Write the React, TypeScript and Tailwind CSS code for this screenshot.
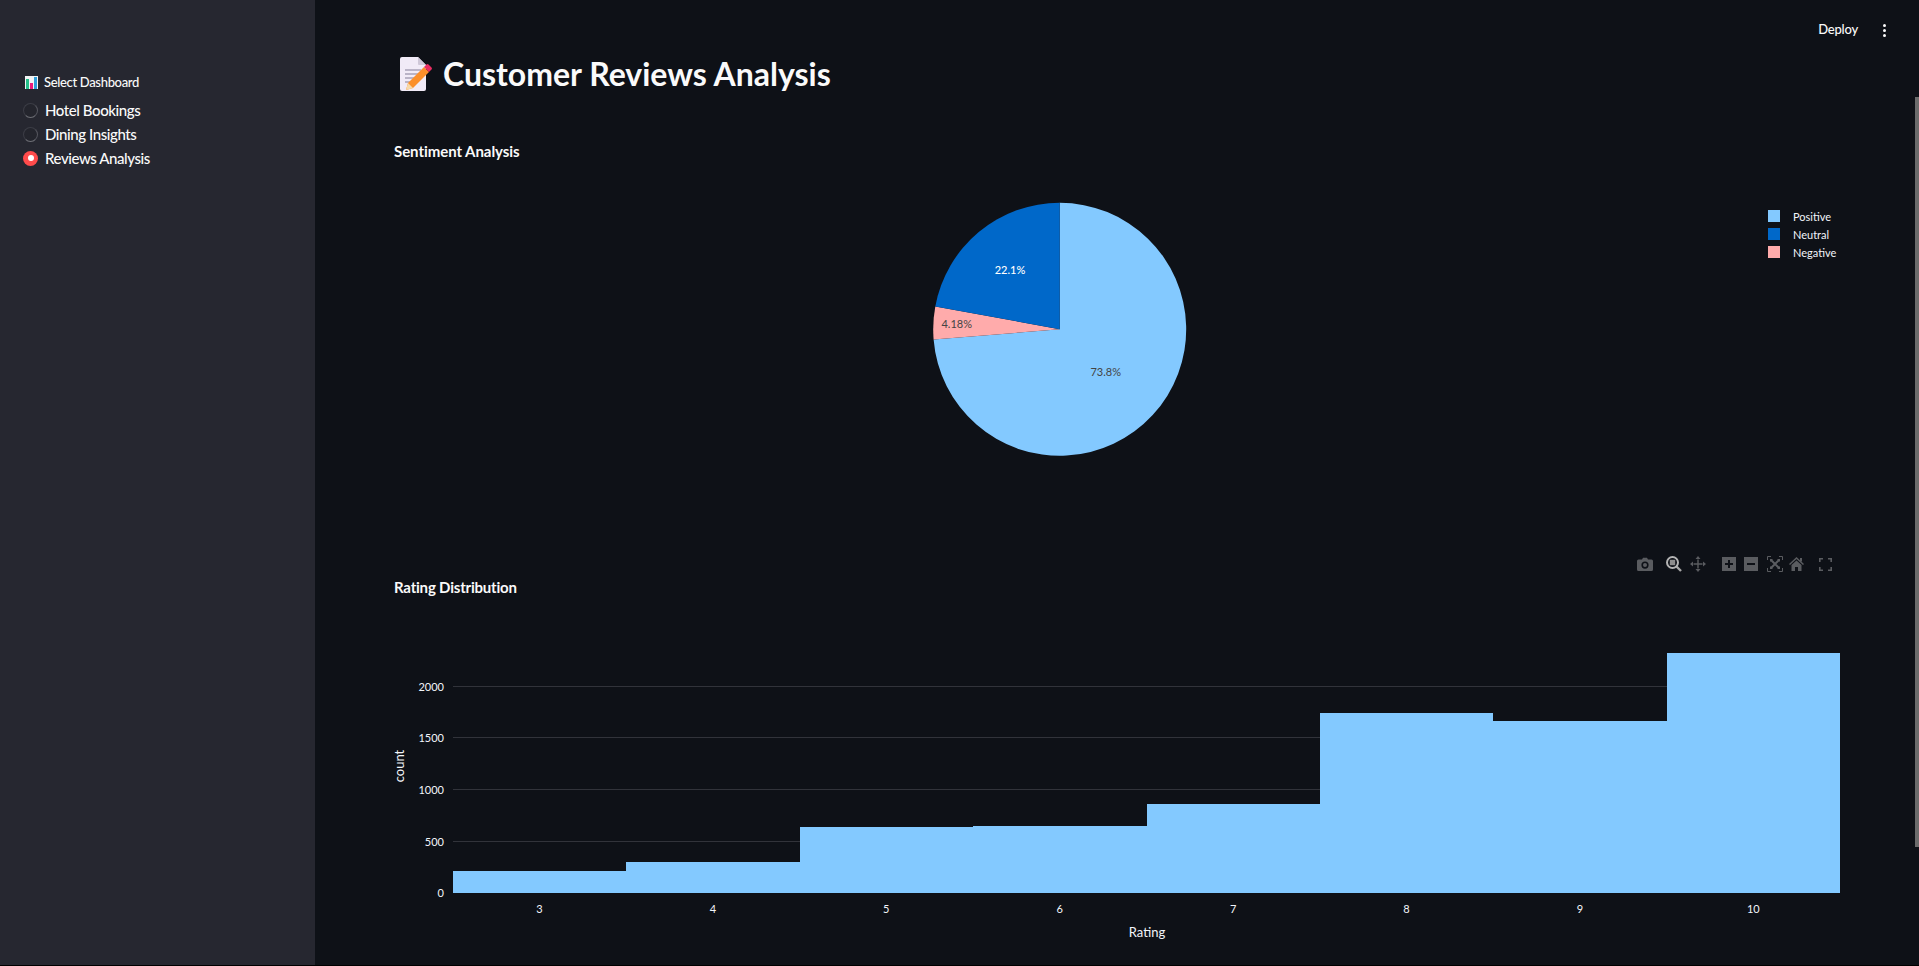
import React from "react";

const sans = "font-['Lato','Noto_Sans',sans-serif]";
const bars = [
  { x: 59, w: 173, top: 271 },
  { x: 232, w: 174, top: 262 },
  { x: 406, w: 173, top: 227 },
  { x: 579, w: 174, top: 226 },
  { x: 753, w: 173, top: 204 },
  { x: 926, w: 173, top: 113 },
  { x: 1099, w: 174, top: 121 },
  { x: 1273, w: 173, top: 53 },
];

function polar(cx: number, cy: number, r: number, pct: number) {
  const a = (pct / 100) * 2 * Math.PI;
  return [cx + r * Math.sin(a), cy - r * Math.cos(a)];
}
function slice(from: number, to: number) {
  const cx = 665.7, cy = 159.3, r = 126.5;
  const [x1, y1] = polar(cx, cy, r, from);
  const [x2, y2] = polar(cx, cy, r, to);
  const large = to - from > 50 ? 1 : 0;
  return `M${cx} ${cy}L${x1} ${y1}A${r} ${r} 0 ${large} 1 ${x2} ${y2}Z`;
}

function Radio({ label, on }: { label: string; on?: boolean }) {
  return (
    <div className="flex h-6 items-center">
      {on ? (
        <span className="ml-[23px] flex h-[15px] w-[15px] items-center justify-center rounded-full bg-[#ff4b4b]">
          <span className="h-[6px] w-[6px] rounded-full bg-white" />
        </span>
      ) : (
        <span className="ml-[23px] h-[15px] w-[15px] rounded-full border border-[#3c3d46] border-b-[#6e6f76] border-r-[#55565e] bg-[#24252d]" />
      )}
      <span className="ml-[7px] text-[15px] font-medium tracking-[-0.42px] text-[#fafafa]">{label}</span>
    </div>
  );
}

function ChartEmoji() {
  return (
    <svg width="13" height="13" viewBox="0 0 13 13" className="shrink-0">
      <rect width="13" height="13" fill="#f2f4f5" />
      <rect x="1" y="3" width="3" height="10" fill="#25c08a" />
      <rect x="5" y="7" width="3" height="6" fill="#ec1c7c" />
      <rect x="9" y="1" width="3" height="12" fill="#2f9fdc" />
    </svg>
  );
}

function MemoEmoji() {
  return (
    <svg width="33" height="34" viewBox="0 0 33 34" className="shrink-0">
      <path d="M1 2a2 2 0 0 1 2-2h16l8 8v24a2 2 0 0 1-2 2H3a2 2 0 0 1-2-2Z" fill="#f1ebf7" />
      <path d="M19 0l8 8h-7a1 1 0 0 1-1-1Z" fill="#cfc8d8" />
      <g stroke="#a8a3b8" strokeWidth="1.4">
        <path d="M6 13h16M6 17h16M6 21h11M6 25h8" />
      </g>
      <path d="M9 26 25 10l5 5-16 16-7 2Z" fill="#fb8f2b" />
      <path d="M9 26l5 5-7 2Z" fill="#f7d9a8" />
      <path d="M25 10l2.5-2.5a1.5 1.5 0 0 1 2 0l3 3a1.5 1.5 0 0 1 0 2L30 15Z" fill="#ea2d62" />
    </svg>
  );
}

const G = "#5a5c60";
function Toolbar() {
  return (
    <div className="flex h-4 items-center justify-end pr-[87px]">
      <svg width="16" height="14" viewBox="0 0 16 14" fill={G}>
        <path fillRule="evenodd" d="M1.5 2.5H5L6 .8h4l1 1.7h3.5A1.5 1.5 0 0 1 16 4v8.5a1.5 1.5 0 0 1-1.500 1.500h-13A1.500 1.500 0 0 1 0 12.500V4a1.500 1.500 0 0 1 1.500-1.500ZM8 4.500a3.600 3.600 0 1 0 0 7.200a3.600 3.600 0 0 0 0-7.200Z" />
        <circle cx="8" cy="8.100" r="2" />
      </svg>
      <svg width="16" height="16" viewBox="0 0 16 16" className="ml-[13px]">
        <path d="M10.500 10.500 15 15" stroke="#a8a8a8" strokeWidth="2.400" />
        <circle cx="6.500" cy="6.500" r="5.500" fill="none" stroke="#b4b4b4" strokeWidth="2" />
        <rect x="3.800" y="3.800" width="5.400" height="5.400" fill="#8d8d8d" />
      </svg>
      <svg width="16" height="16" viewBox="0 0 16 16" className="ml-[8px]" fill={G}>
        <path d="M7.300 3.500h1.400v9H7.300ZM3.500 7.300h9v1.400h-9Z" />
        <path d="M8 0l2.500 3h-5ZM8 16l2.500-3h-5ZM0 8l3-2.500v5ZM16 8l-3-2.500v5Z" />
      </svg>
      <svg width="14" height="14" viewBox="0 0 14 14" className="ml-[16px]">
        <rect width="14" height="14" fill={G} />
        <path d="M6 3h2v3h3v2H8v3H6V8H3V6h3Z" fill="#0e1117" />
      </svg>
      <svg width="14" height="14" viewBox="0 0 14 14" className="ml-[8px]">
        <rect width="14" height="14" fill={G} />
        <rect x="3" y="6" width="8" height="2" fill="#0e1117" />
      </svg>
      <svg width="16" height="16" viewBox="0 0 16 16" className="ml-[9px]" fill="none" stroke={G} strokeWidth="1">
        <path d="M.5 4V.5H4M12 .5h3.500V4M15.500 12v3.500H12M4 15.500H.5V12" />
        <path d="M4 4l8 8M12 4l-8 8" strokeWidth="2" />
        <path d="M3 3h3L3 6ZM13 3v3l-3-3ZM13 13h-3l3-3ZM3 13v-3l3 3Z" fill={G} stroke="none" />
      </svg>
      <svg width="15" height="14" viewBox="0 0 15 14" className="ml-[6px]" fill={G}>
        <path d="M7.500 0 15 7l-1 1-6.500-6L1 8 0 7Z" />
        <path d="M2.500 8 7.500 3.500 12.500 8v6H9V10H6v4H2.500Z" />
        <rect x="11" y="1" width="2" height="3.500" />
      </svg>
      <svg width="13" height="13" viewBox="0 0 13 13" className="ml-[15px]" fill="none" stroke={G} strokeWidth="1.600">
        <path d="M.8 4V.8H4M9 .8h3.200V4M12.200 9v3.200H9M4 12.200H.8V9" />
      </svg>
    </div>
  );
}

export default function App() {
  return (
    <div className={`${sans} box-border flex h-[966px] w-full overflow-hidden border-b border-black bg-[#0e1117] text-[#fafafa]`}>
      <aside className="w-[315px] shrink-0 bg-[#262730] pt-[70px]">
        <div className="flex h-6 items-center pl-[25px]">
          <ChartEmoji />
          <span className="ml-[6px] pt-[2px] text-[13px] font-medium tracking-[-0.33px]">Select Dashboard</span>
        </div>
        <div className="mt-[4px]">
          <Radio label="Hotel Bookings" />
          <Radio label="Dining Insights" />
          <Radio label="Reviews Analysis" on />
        </div>
      </aside>
      <main className="relative min-w-0 flex-1 pl-[79px] pt-[50px]">
        <div className="absolute right-[33px] top-[18px] flex h-6 items-center gap-[25px]">
          <span className="text-[13px] font-medium tracking-[-0.2px]">Deploy</span>
          <span className="flex w-[3px] flex-col gap-[2px]">
            <span className="h-[3px] w-[3px] rounded-full bg-[#fafafa]" />
            <span className="h-[3px] w-[3px] rounded-full bg-[#fafafa]" />
            <span className="h-[3px] w-[3px] rounded-full bg-[#fafafa]" />
          </span>
        </div>
        <div className="absolute right-0 top-[97px] h-[750px] w-[4px] bg-[#6c6c6c]" />

        <div className="flex h-12 items-center pl-[5px]">
          <MemoEmoji />
          <h1 className="ml-[11px] text-[32px] font-bold">Customer Reviews Analysis</h1>
        </div>
        <h2 className="mt-[41px] flex h-6 items-center text-[15px] font-bold tracking-[-0.05px]">Sentiment Analysis</h2>

        <svg width="1466" height="380" className="mt-[7px] block overflow-visible font-['Lato',sans-serif]">
          <path d={slice(0, 73.72)} fill="#83c9ff" />
          <path d={slice(73.72, 77.9)} fill="#ffabab" />
          <path d={slice(77.9, 100)} fill="#0068c9" />
          <text x="711.7" y="206" textAnchor="middle" fontSize="11" fill="#444">73.8%</text>
          <text x="616" y="104" textAnchor="middle" fontSize="11" fontWeight="500" fill="#fff">22.1%</text>
          <text x="562.7" y="158" textAnchor="middle" fontSize="11" fill="#444">4.18%</text>
          <rect x="1374" y="40" width="12" height="12" fill="#83c9ff" />
          <rect x="1374" y="58" width="12" height="12" fill="#0068c9" />
          <rect x="1374" y="76" width="12" height="12" fill="#ffabab" />
          <g fontSize="11" fill="#f2f5fa">
            <text x="1399" y="51">Positive</text>
            <text x="1399" y="69">Neutral</text>
            <text x="1399" y="87">Negative</text>
          </g>
        </svg>

        <div className="mt-[6px]"><Toolbar /></div>
        <h2 className="mt-[3px] flex h-6 items-center text-[15px] font-bold tracking-[-0.2px]">Rating Distribution</h2>

        <svg width="1500" height="366" className="mt-[1px] block overflow-visible font-['Lato',sans-serif]">
          <g stroke="#31333a" strokeWidth="1">
            {[86.5, 137.5, 189.5, 241.5].map((y) => (
              <line key={y} x1="59" x2="1446" y1={y} y2={y} />
            ))}
          </g>
          {bars.map((b) => (
            <rect key={b.x} x={b.x} y={b.top} width={b.w} height={293 - b.top} fill="#83c9ff" />
          ))}
          <g fontSize="11" fill="#f2f5fa" textAnchor="end">
            <text x="50" y="91">2000</text>
            <text x="50" y="142">1500</text>
            <text x="50" y="194">1000</text>
            <text x="50" y="246">500</text>
            <text x="50" y="297">0</text>
          </g>
          <g fontSize="11" fill="#f2f5fa" textAnchor="middle">
            {[3, 4, 5, 6, 7, 8, 9, 10].map((n, i) => (
              <text key={n} x={145.500 + i * 173.400} y="313">{n}</text>
            ))}
          </g>
          <text x="753" y="337" textAnchor="middle" fontSize="13" fill="#f2f5fa">Rating</text>
          <text x="0" y="0" transform="translate(10 166) rotate(-90)" textAnchor="middle" fontSize="13" fill="#f2f5fa">count</text>
        </svg>
      </main>
    </div>
  );
}
